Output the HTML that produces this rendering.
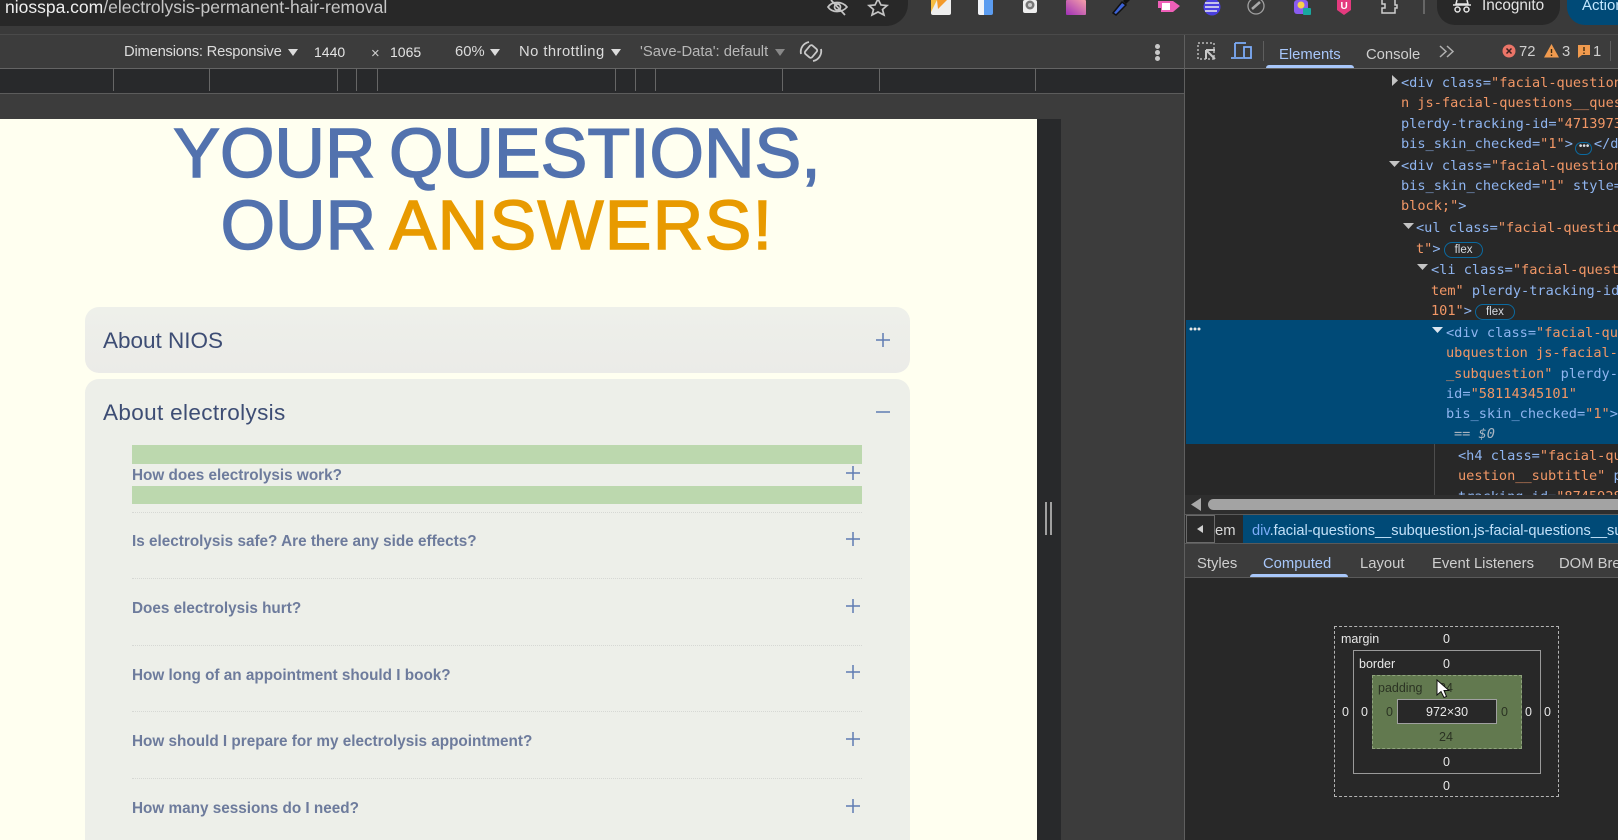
<!DOCTYPE html>
<html><head><meta charset="utf-8"><title>DevTools</title>
<style>
html,body{margin:0;padding:0;width:1618px;height:840px;overflow:hidden;background:#3c3c3c}
*{box-sizing:border-box}
#w{position:relative;width:1618px;height:840px;overflow:hidden;background:#3c3c3c}
.a,.t,.m{position:absolute}
.t{white-space:nowrap;line-height:20px;height:20px;font-family:"Liberation Sans",sans-serif}
.m{white-space:pre;line-height:20px;height:20px;font-family:"DejaVu Sans Mono",monospace;font-size:13.6px;color:#8fb5f0}
.m i{font-style:normal;color:#f29766}
.q{position:absolute;left:132px;font:bold 15.3px/20px "Liberation Sans",sans-serif;color:#6d7b9c;white-space:nowrap}
.d{position:absolute;left:132px;width:730px;height:0;border-top:1px dotted #d6d8d4}
.pill{display:inline-block;height:16px;line-height:14px;border:1px solid #0b6aa0;border-radius:8px;font-size:11.5px;color:#d8dce2;padding:0 10px;vertical-align:0;font-family:"Liberation Sans",sans-serif;margin-left:3px}
.tk{position:absolute;top:68px;width:1px;height:23px;background:#666}
.b{font-size:12.5px;color:#e8e8e8;font-family:"Liberation Sans",sans-serif}
.h{left:0;width:994px;height:70px;line-height:70px;text-align:center;font-size:70px;word-spacing:-6px;color:#5272ae;-webkit-text-stroke:1.5px #5272ae}
</style></head>
<body><div id="w">
<!-- browser top -->
<div class="a" style="left:0;top:0;width:1618px;height:34px;background:#3a3a3a"></div>
<div class="a" style="left:0;top:0;width:908px;height:26px;background:#282828;border-bottom-right-radius:22px"></div>
<div class="t" style="left:5px;top:-3px;font-size:17.5px;color:#c6c6c6"><span style="color:#eee">niosspa.com</span>/electrolysis-permanent-hair-removal</div>
<svg class="a" style="left:826px;top:0" width="66" height="18" viewBox="0 0 66 18" fill="none" stroke="#c4c4c4" stroke-width="1.7"><path d="M2 7C6 1 16 1 21 7C16 13 6 13 2 7Z"/><circle cx="11.5" cy="7" r="3"/><path d="M5 0L19 15"/><path fill="none" d="M52 -1L55 5L61 5.500L56.500 9.500L58 15L52 12L46 15L47.500 9.500L43 5.500L49 5Z"/></svg>
<svg class="a" style="left:925px;top:0" width="500" height="26" viewBox="0 0 500 26">
<defs><linearGradient id="g" x1="1" y1="0" x2="0" y2="1"><stop offset="0" stop-color="#f6a0a8"/><stop offset="1" stop-color="#a030b8"/></linearGradient></defs>
<path d="M6 0H26V13Q26 15 24 15H8Q6 15 6 13Z" fill="#eee"/><path d="M6 0H12L6 12Z" fill="#f6bd41"/><path d="M12 0H22L13 9Z" fill="#f39a2c"/>
<path d="M53 0H59V15H55Q53 15 53 13Z" fill="#f2f4f8"/><path d="M59 0H68V13Q68 15 66 15H59Z" fill="#5b9cf0"/>
<rect x="98" y="0" width="14" height="13" rx="2" fill="#eee"/><circle cx="105" cy="5" r="4.500" fill="#777"/><circle cx="105" cy="5" r="2" fill="#ccc"/>
<rect x="141" y="0" width="20" height="15" rx="1" fill="url(#g)"/>
<path d="M191 15L188 13L197 2L201 5Z" fill="#3c62d6" stroke="#111" stroke-width="1.500"/><path d="M198 1L202 -3L205 0L201 4Z" fill="#111"/>
<path d="M233 1H248L255 6L248 12H236V8H233Z" fill="#ef5fb8"/><rect x="237" y="3" width="8" height="7" fill="#fff"/>
<circle cx="287" cy="7" r="8.500" fill="#4a3fe0"/><path d="M280 3H294M280 7H294M280 11H292" stroke="#eee" stroke-width="1.600"/>
<circle cx="331" cy="6" r="8" fill="none" stroke="#a0a0a0" stroke-width="1.300"/><path d="M327 9L335 2" stroke="#aaa" stroke-width="2.500"/>
<rect x="369" y="0" width="14" height="14" rx="3" fill="#8a5cf0"/><circle cx="376" cy="5" r="3.500" fill="#f8d14a"/><rect x="378" y="8" width="8" height="7" rx="1" fill="#18a8a0"/>
<path d="M412 0H426V10L419 15L412 10Z" fill="#e43a7e"/><text x="415.500" y="9" font-family="Liberation Sans,sans-serif" font-size="10" font-weight="bold" fill="#fff">U</text>
<path d="M457 0V4H460V8H457V13H470V8H472V5H470V0" fill="none" stroke="#cfcfcf" stroke-width="1.500"/>
</svg>
<div class="a" style="left:1423px;top:0;width:2px;height:14px;background:#666"></div>
<div class="a" style="left:1437px;top:0;width:123px;height:25px;background:#282828;border-radius:0 0 18px 18px"></div>
<svg class="a" style="left:1452px;top:0" width="20" height="14" viewBox="0 0 20 14" fill="none" stroke="#e4e4e4" stroke-width="1.500"><path d="M5 0L4 4H16L15 0M1 5H19" /><circle cx="5.500" cy="9.500" r="2.500"/><circle cx="14.500" cy="9.500" r="2.500"/></svg>
<div class="t" style="left:1482px;top:-4px;font-size:15.3px;color:#e4e4e4">Incognito</div>
<div class="a" style="left:1567px;top:0;width:60px;height:25px;background:#004a77;border-radius:0 0 0 18px"></div>
<div class="t" style="left:1582px;top:-4px;font-size:15px;color:#c2e7ff">Action</div>
<div class="a" style="left:0;top:34px;width:1618px;height:1px;background:#4a4a4a"></div>

<!-- device toolbar -->
<div class="a" style="left:0;top:35px;width:1618px;height:33px;background:#3c3c3c"></div>
<div class="a" style="left:0;top:68px;width:1185px;height:1px;background:#646464"></div>
<div class="t" style="left:124px;top:42px;font-size:14.8px;letter-spacing:-.24px;color:#dcdcdc">Dimensions: Responsive</div>
<div class="a" style="left:288px;top:49px;border:5px solid transparent;border-top:7px solid #dcdcdc;border-bottom:0"></div>
<div class="t" style="left:314px;top:42px;font-size:14px;color:#e4e4e4">1440</div>
<div class="t" style="left:371px;top:44px;font-size:14.8px;color:#cfcfcf">×</div>
<div class="t" style="left:390px;top:42px;font-size:14px;color:#e4e4e4">1065</div>
<div class="t" style="left:455px;top:42px;font-size:14.8px;color:#dcdcdc">60%</div>
<div class="a" style="left:490px;top:49px;border:5px solid transparent;border-top:7px solid #dcdcdc;border-bottom:0"></div>
<div class="t" style="left:519px;top:42px;font-size:14.8px;letter-spacing:.45px;color:#dcdcdc">No throttling</div>
<div class="a" style="left:611px;top:49px;border:5px solid transparent;border-top:7px solid #dcdcdc;border-bottom:0"></div>
<div class="t" style="left:640px;top:42px;font-size:14.8px;color:#b8b8b8">'Save-Data': default</div>
<div class="a" style="left:775px;top:49px;border:5px solid transparent;border-top:7px solid #888;border-bottom:0"></div>
<svg class="a" style="left:799px;top:39px" width="24" height="25" viewBox="0 0 24 25" fill="none" stroke="#c8c8c8" stroke-width="1.800"><rect x="7.500" y="7" width="9" height="11" rx="2" transform="rotate(40 12 12.500)"/><path d="M2 15A10 10 0 0 1 10 3M22 10A10 10 0 0 1 14 22"/></svg>
<div class="a" style="left:1155px;top:44px;width:5px;height:5px;border-radius:50%;background:#c8c8c8"></div>
<div class="a" style="left:1155px;top:50px;width:5px;height:5px;border-radius:50%;background:#c8c8c8"></div>
<div class="a" style="left:1155px;top:56px;width:5px;height:5px;border-radius:50%;background:#c8c8c8"></div>

<!-- ruler -->
<div class="a" style="left:0;top:69px;width:1185px;height:24px;background:#28292b"></div>
<div class="a" style="left:0;top:93px;width:1185px;height:1px;background:#5c5c5c"></div>
<div class="tk" style="left:113px"></div><div class="tk" style="left:209px"></div><div class="tk" style="left:337px"></div><div class="tk" style="left:356px"></div><div class="tk" style="left:377px"></div><div class="tk" style="left:615px"></div><div class="tk" style="left:635px"></div><div class="tk" style="left:655px"></div><div class="tk" style="left:782px"></div><div class="tk" style="left:879px"></div><div class="tk" style="left:1035px"></div>

<!-- canvas area -->
<div class="a" style="left:0;top:94px;width:1185px;height:746px;background:#3c3c3c"></div>
<div class="a" style="left:1037px;top:119px;width:24px;height:721px;background:#28292b"></div>
<div class="a" style="left:1045px;top:502px;width:2px;height:33px;background:#a0a0a0"></div>
<div class="a" style="left:1050px;top:502px;width:2px;height:33px;background:#a0a0a0"></div>

<!-- page -->
<div class="a" style="left:0;top:119px;width:1037px;height:721px;background:#fffff0;overflow:hidden">
  <div class="t h" style="top:-1px">YOUR QUESTIONS,</div>
  <div class="t h" style="top:71px">OUR <span style="color:#e89a00;-webkit-text-stroke:1.5px #e89a00;letter-spacing:1.3px">ANSWERS!</span></div>
</div>
<div class="a" style="left:85px;top:307px;width:825px;height:66px;border-radius:14px;background:linear-gradient(#eef0ea,#ebebe8)"></div>
<div class="t" style="left:103px;top:331px;font-size:22.5px;color:#3d4d74">About NIOS</div>
<svg class="a" style="left:876px;top:333px" width="14" height="14" stroke="#5f7cb2" stroke-width="1.500"><path d="M7 0V14M0 7H14"/></svg>
<div class="a" style="left:85px;top:379px;width:825px;height:461px;border-radius:14px 14px 0 0;background:#edefe9"></div>
<div class="t" style="left:103px;top:403px;font-size:22.5px;letter-spacing:.35px;color:#3d4d74">About electrolysis</div>
<svg class="a" style="left:876px;top:405px" width="14" height="14" stroke="#5f7cb2" stroke-width="1.500"><path d="M0 7H14"/></svg>

<div class="a" style="left:132px;top:445px;width:730px;height:19px;background:#bcd8ae"></div>
<div class="a" style="left:132px;top:486px;width:730px;height:18px;background:#bcd8ae"></div>
<div class="q" style="top:466px">How does electrolysis work?</div>
<div class="d" style="top:512px"></div>
<div class="q" style="top:532px">Is electrolysis safe? Are there any side effects?</div>
<div class="d" style="top:578px"></div>
<div class="q" style="top:599px">Does electrolysis hurt?</div>
<div class="d" style="top:645px"></div>
<div class="q" style="top:666px">How long of an appointment should I book?</div>
<div class="d" style="top:711px"></div>
<div class="q" style="top:732px">How should I prepare for my electrolysis appointment?</div>
<div class="d" style="top:778px"></div>
<div class="q" style="top:799px">How many sessions do I need?</div>
<svg class="a" style="left:846px;top:466px" width="14" height="350" stroke="#5f7cb2" stroke-width="1.500" fill="none"><path d="M7 0V14M0 7H14M7 66V80M0 73H14M7 133V147M0 140H14M7 199V213M0 206H14M7 266V280M0 273H14M7 333V347M0 340H14"/></svg>

<!-- devtools -->
<div class="a" style="left:1184px;top:35px;width:1px;height:805px;background:#5f5f5f"></div>
<div class="a" style="left:1185px;top:69px;width:433px;height:771px;background:#282828"></div>
<div class="a" style="left:1185px;top:68px;width:433px;height:1px;background:#646464"></div>
<svg class="a" style="left:1197px;top:42px" width="20" height="19" fill="none"><rect x="1" y="1" width="16" height="16" stroke="#b8b8b8" stroke-width="1.500" stroke-dasharray="2 2"/><path d="M9 8H18M9 8V17M9 8L18 17" stroke="#c8c8c8" stroke-width="2"/></svg>
<svg class="a" style="left:1231px;top:42px" width="22" height="19" fill="none" stroke="#7cacf8" stroke-width="1.800"><path d="M4 1H15M4 1V15M0 16H12"/><rect x="13" y="5" width="7" height="11"/></svg>
<div class="a" style="left:1263px;top:41px;width:1px;height:20px;background:#5e5e5e"></div>
<div class="t" style="left:1279px;top:45px;font-size:14.8px;color:#a8c7fa">Elements</div>
<div class="a" style="left:1266px;top:65px;width:88px;height:3px;background:#a8c7fa;border-radius:3px 3px 0 0"></div>
<div class="t" style="left:1366px;top:45px;font-size:14.8px;color:#cfcfcf">Console</div>
<svg class="a" style="left:1439px;top:45px" width="16" height="13" fill="none" stroke="#b0b0b0" stroke-width="1.500"><path d="M1 1L7 6.500L1 12M8 1L14 6.500L8 12"/></svg>
<svg class="a" style="left:1502px;top:44px" width="14" height="14"><circle cx="7" cy="7" r="6.500" fill="#ec7568"/><path d="M4.500 4.500L9.500 9.500M9.500 4.500L4.500 9.500" stroke="#3a2020" stroke-width="1.500"/></svg>
<div class="t" style="left:1519px;top:42px;font-size:14.8px;color:#cfcfcf">72</div>
<svg class="a" style="left:1544px;top:44px" width="15" height="14"><path d="M7.500 0L15 13.500H0Z" fill="#f09a4e"/><path d="M7.500 5V9M7.500 10.500V12" stroke="#3c2a10" stroke-width="1.400"/></svg>
<div class="t" style="left:1562px;top:42px;font-size:14.8px;color:#cfcfcf">3</div>
<svg class="a" style="left:1577px;top:45px" width="14" height="14"><path d="M1 0H13V10H5L1 13Z" fill="#f09a4e"/><path d="M7 2V6M7 7.500V9" stroke="#3c2a10" stroke-width="1.400"/></svg>
<div class="t" style="left:1593px;top:42px;font-size:14.8px;color:#cfcfcf">1</div>
<div class="a" style="left:1610px;top:41px;width:1px;height:20px;background:#5e5e5e"></div>

<div class="a" style="left:1185px;top:69px;width:433px;height:426px;overflow:hidden">
<div class="a" style="left:1px;top:251px;width:432px;height:124px;background:#004a77"></div>
<svg class="a" style="left:0;top:0" width="433" height="360" fill="#c4c4c4"><path d="M207 6V17L213 11.500Z"/><path d="M204 92H215L209.500 98Z"/><path d="M218 154H229L223.500 160Z"/><path d="M232 195H243L237.500 201Z"/><path d="M247 258H258L252.500 264Z" fill="#dce6f0"/></svg>
<div class="a" style="left:249px;top:375px;width:1px;height:60px;background:#4d4d4d"></div>
<svg class="a" style="left:4px;top:258px" width="14" height="5" fill="#e8e8e8"><circle cx="2" cy="2" r="1.500"/><circle cx="6" cy="2" r="1.500"/><circle cx="10" cy="2" r="1.500"/></svg>
<div class="m" style="left:216px;top:4px">&lt;div class=<i>"facial-question</i></div>
<div class="m" style="left:216px;top:24px"><i>n js-facial-questions__ques</i></div>
<div class="m" style="left:216px;top:45px">plerdy-tracking-id=<i>"47139731</i></div>
<div class="m" style="left:216px;top:65px">bis_skin_checked=<i>"1"</i>&gt;<span class="pill" style="padding:0 3px;margin:0 2px 0 2px;width:17px;height:13px;line-height:7px;font-size:10px;vertical-align:-1px">•••</span>&lt;/d</div>
<div class="m" style="left:216px;top:87px">&lt;div class=<i>"facial-question</i></div>
<div class="m" style="left:216px;top:107px">bis_skin_checked=<i>"1"</i> style=</div>
<div class="m" style="left:216px;top:127px"><i>block;"</i>&gt;</div>
<div class="m" style="left:231px;top:149px">&lt;ul class=<i>"facial-questio</i></div>
<div class="m" style="left:231px;top:170px"><i>t"</i>&gt;<span class="pill">flex</span></div>
<div class="m" style="left:246px;top:191px">&lt;li class=<i>"facial-quest</i></div>
<div class="m" style="left:246px;top:212px"><i>tem"</i> plerdy-tracking-id</div>
<div class="m" style="left:246px;top:232px"><i>101"</i>&gt;<span class="pill">flex</span></div>
<div class="m" style="left:261px;top:254px">&lt;div class=<i>"facial-qu</i></div>
<div class="m" style="left:261px;top:274px"><i>ubquestion js-facial-</i></div>
<div class="m" style="left:261px;top:295px"><i>_subquestion"</i> plerdy-</div>
<div class="m" style="left:261px;top:315px">id=<i>"58114345101"</i></div>
<div class="m" style="left:261px;top:335px">bis_skin_checked=<i>"1"</i>&gt;</div>
<div class="m" style="left:269px;top:355px;color:#a8b4c0;font-style:italic">== $0</div>
<div class="m" style="left:273px;top:377px">&lt;h4 class=<i>"facial-qu</i></div>
<div class="m" style="left:273px;top:397px"><i>uestion__subtitle"</i> p</div>
<div class="m" style="left:273px;top:418px">tracking-id=<i>"8745928</i></div>
</div>

<div class="a" style="left:1185px;top:495px;width:433px;height:20px;background:#2e2e2e"></div>
<svg class="a" style="left:1190px;top:498px" width="12" height="14" fill="#a8a8a8"><path d="M11 0V13L1 6.500Z"/></svg>
<div class="a" style="left:1208px;top:499px;width:420px;height:11px;background:#a3a3a3;border-radius:6px"></div>
<div class="a" style="left:1185px;top:514px;width:433px;height:1px;background:#5a5a5a"></div>
<div class="a" style="left:1185px;top:515px;width:433px;height:28px;background:#2a2a2a"></div>
<div class="a" style="left:1186px;top:515px;width:29px;height:28px;border:1px solid #6a6a6a;background:#2a2a2a"></div>
<svg class="a" style="left:1197px;top:525px" width="7" height="9" fill="#d0d0d0"><path d="M6 0V8L0 4Z"/></svg>
<div class="t" style="left:1215px;top:521px;font-size:14.8px;color:#d8d8d8">em</div>
<div class="a" style="left:1243px;top:515px;width:375px;height:28px;background:#004a77"></div>
<div class="t" style="left:1252px;top:521px;font-size:14.6px;color:#c2e0f8"><span style="color:#7cacf8">div</span>.facial-questions__subquestion.js-facial-questions__subquestion</div>
<div class="a" style="left:1185px;top:543px;width:433px;height:1px;background:#5a5a5a"></div>
<div class="a" style="left:1185px;top:544px;width:433px;height:33px;background:#3c3c3c"></div>
<div class="a" style="left:1185px;top:577px;width:433px;height:1px;background:#5a5a5a"></div>
<div class="t" style="left:1197px;top:554px;font-size:14.8px;color:#cfcfcf">Styles</div>
<div class="t" style="left:1263px;top:554px;font-size:14.8px;color:#a8c7fa">Computed</div>
<div class="a" style="left:1250px;top:574px;width:98px;height:3px;background:#a8c7fa;border-radius:3px 3px 0 0"></div>
<div class="t" style="left:1360px;top:554px;font-size:14.8px;color:#cfcfcf">Layout</div>
<div class="t" style="left:1432px;top:554px;font-size:14.8px;color:#cfcfcf">Event Listeners</div>
<div class="t" style="left:1559px;top:554px;font-size:14.8px;color:#cfcfcf">DOM Breakpoints</div>

<!-- box model -->
<div class="a" style="left:1334px;top:626px;width:225px;height:171px;border:1px dashed #b4b4b4"></div>
<div class="a" style="left:1353px;top:650px;width:188px;height:124px;border:1px solid #9a9a9a"></div>
<div class="a" style="left:1372px;top:675px;width:150px;height:74px;background:#62794f;border:1px dashed #8fa37c"></div>
<div class="a" style="left:1397px;top:699px;width:100px;height:25px;background:#282828;border:1px solid #a0a0a0"></div>
<div class="t b" style="left:1341px;top:629px">margin</div>
<div class="t b" style="left:1359px;top:654px">border</div>
<div class="t b" style="left:1378px;top:678px;color:#2b3323">padding</div>
<div class="t b" style="left:1443px;top:629px">0</div>
<div class="t b" style="left:1443px;top:654px">0</div>
<div class="t b" style="left:1439px;top:678px;color:#2b3323">24</div>
<div class="t b" style="left:1426px;top:702px;width:42px;text-align:center">972×30</div>
<div class="t b" style="left:1439px;top:727px;color:#2b3323">24</div>
<div class="t b" style="left:1443px;top:752px">0</div>
<div class="t b" style="left:1443px;top:776px">0</div>
<div class="t b" style="left:1342px;top:702px">0</div>
<div class="t b" style="left:1361px;top:702px">0</div>
<div class="t b" style="left:1386px;top:702px;color:#2b3323">0</div>
<div class="t b" style="left:1501px;top:702px;color:#2b3323">0</div>
<div class="t b" style="left:1525px;top:702px">0</div>
<div class="t b" style="left:1544px;top:702px">0</div>
<svg class="a" style="left:1436px;top:679px" width="14" height="20"><path d="M1 1V16L5 12.500L8 18.500L10.500 17.500L8 11.500H13Z" fill="#fff" stroke="#111" stroke-width="1"/></svg>
</div></body></html>
